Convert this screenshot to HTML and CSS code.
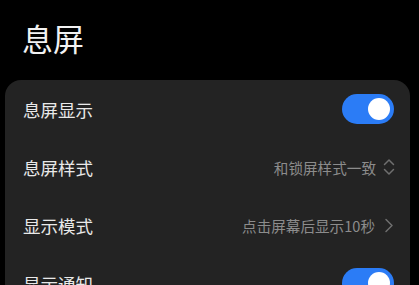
FILE: index.html
```html
<!DOCTYPE html>
<html lang="zh-CN">
<head>
    <meta charset="UTF-8">
    <meta name="viewport" content="width=device-width, initial-scale=1.0">
    <title>息屏</title>
    <link rel="stylesheet" href="styles.css">
</head>
<body>

    <h1 class="page-title">息屏</h1>

    <div class="card">
        <div class="row">
            <span class="label">息屏显示</span>
            <span class="switch on"><span class="knob"></span></span>
        </div>
        <div class="row">
            <span class="label">息屏样式</span>
            <span class="value">和锁屏样式一致
                <svg class="icon-updown" width="12" height="18" viewBox="0 0 12 18">
                    <path d="M1.5 6.5 L6 2 L10.5 6.5 M1.5 11.5 L6 16 L10.5 11.5" fill="none" stroke="#6f6f6f" stroke-width="1.5" stroke-linecap="round" stroke-linejoin="round"/>
                </svg>
            </span>
        </div>
        <div class="row">
            <span class="label">显示模式</span>
            <span class="value">点击屏幕后显示10秒
                <svg class="icon-more" width="10" height="15" viewBox="0 0 10 15">
                    <path d="M2 1.5 L8 7.5 L2 13.5" fill="none" stroke="#6f6f6f" stroke-width="1.5" stroke-linecap="round" stroke-linejoin="round"/>
                </svg>
            </span>
        </div>
        <div class="row">
            <span class="label">显示通知</span>
            <span class="switch on"><span class="knob"></span></span>
        </div>
    </div>

</body>
</html>
```

FILE: styles.css
```css
html, body {
    margin: 0;
    background: #000;
}
body {
    font-family: "Noto Sans CJK SC", "Noto Sans", sans-serif;
    color: #e9e9e9;
    padding: 0 9px 0 5px;
    height: 285px;
    overflow: hidden;
}
.page-title {
    margin: 0;
    padding: 18px 0 0 17px;
    height: 80px;
    box-sizing: border-box;
    font-size: 31px;
    font-weight: 400;
    line-height: 40px;
    color: #f2f2f2;
}
.card {
    background: #232323;
    border-radius: 16px;
    padding: 0 16px 0 18px;
}
.row {
    height: 58px;
    display: flex;
    align-items: center;
    justify-content: space-between;
}
.label {
    font-size: 17.5px;
}
.value {
    display: flex;
    align-items: center;
    font-size: 14.6px;
    color: #8c8c8c;
}
.icon-updown {
    margin-left: 7px;
    margin-right: -1px;
}
.icon-more {
    margin-left: 9px;
}
.switch {
    width: 52px;
    height: 30px;
    border-radius: 15px;
    background: #2b7cf6;
    position: relative;
}
.switch .knob {
    position: absolute;
    top: 4px;
    right: 4px;
    width: 22px;
    height: 22px;
    border-radius: 50%;
    background: #fff;
}
```
